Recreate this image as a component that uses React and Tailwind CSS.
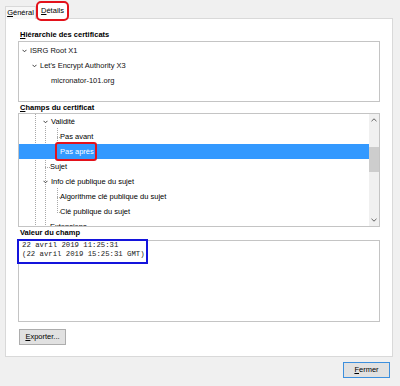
const Chevron = () => (
  <svg width="5" height="4" viewBox="0 0 5 4" className="shrink-0">
    <path d="M0.5 0.8 L2.5 2.8 L4.5 0.8" fill="none" stroke="#404040" strokeWidth="1" />
  </svg>
);

const U = ({ children }) => <span className="underline underline-offset-1">{children}</span>;

const fields = [
  { label: 'Validité', pl: 'pl-[24px]', chevron: true },
  { label: 'Pas avant', pl: 'pl-[41px]' },
  { label: 'Pas après', pl: 'pl-[41px]', selected: true },
  { label: 'Sujet', pl: 'pl-[31px]' },
  { label: 'Info clé publique du sujet', pl: 'pl-[24px]', chevron: true },
  { label: 'Algorithme clé publique du sujet', pl: 'pl-[41px]' },
  { label: 'Clé publique du sujet', pl: 'pl-[41px]' },
  { label: 'Extensions', pl: 'pl-[31px]' },
];

const TreeLines = () => (
  <svg className="absolute inset-0 pointer-events-none" width="350" height="112">
    <g stroke="#a8a8a8" strokeWidth="1" strokeDasharray="1 1" fill="none">
      <path d="M16.5 0 V112" />
      <path d="M26.5 12 V112" />
      <path d="M38.5 14 V38" />
      <path d="M38.5 74 V98" />
      <path d="M38 23.5 H41" />
      <path d="M26 53.5 H31" />
      <path d="M38 83.5 H41" />
      <path d="M38 98.5 H41" />
      <path d="M26 113.5 H31" />
    </g>
  </svg>
);

export default function App() {
  return (
    <div className="w-[400px] h-[386px] bg-[#f0f0f0] overflow-hidden text-[7.5px] text-black font-['Liberation_Sans',Arial,sans-serif]">
      {/* tabs */}
      <div className="flex items-end h-[19px] pl-[5px]">
        <div className="h-[13px] w-[31px] border border-b-0 border-[#d9d9d9] bg-[#f7f7f7] flex items-center justify-center leading-none">
          <span><U>G</U>énéral</span>
        </div>
        <div className="relative z-10 ml-[2px] h-[16px] w-[29px] bg-white flex items-center justify-center leading-none rounded-[3px] outline-2 outline-[#e3121b]">
          <span><U>D</U>étails</span>
        </div>
      </div>

      {/* panel */}
      <div className="-mt-px ml-[5px] w-[388px] h-[339px] border border-[#d9d9d9] bg-white pl-[12px] pt-[10px]">
        <div className="h-[12px] leading-[12px] font-bold pl-[2px]"><U>H</U>iérarchie des certificats</div>
        <div className="w-[362px] h-[61px] border border-[#c4c4c4] pt-[1px] text-[#111]">
          <div className="h-[15px] flex items-center gap-[3px] pl-[3px]">
            <Chevron />
            <span>ISRG Root X1</span>
          </div>
          <div className="h-[15px] flex items-center gap-[3px] pl-[13px]">
            <Chevron />
            <span>Let's Encrypt Authority X3</span>
          </div>
          <div className="h-[15px] flex items-center pl-[32px]">micronator-101.org</div>
        </div>

        <div className="h-[11px] leading-[11px] font-bold pl-[2px]"><U>C</U>hamps du certificat</div>
        <div className="w-[362px] h-[114px] border border-[#c4c4c4] flex overflow-hidden">
          <div className="relative flex-1">
            <TreeLines />
            {fields.map((f) => (
              <div
                key={f.label}
                className={`relative h-[15px] flex items-center gap-[3px] ${f.pl} ${f.selected ? 'bg-[#3399ff] text-white' : ''}`}
              >
                {f.chevron && <Chevron />}
                <span>{f.label}</span>
                {f.selected && (
                  <span className="absolute left-[36px] -top-[2px] w-[42px] h-[19px] border-2 border-[#e3121b] rounded-[3px]" />
                )}
              </div>
            ))}
          </div>
          <div className="w-[10px] bg-[#f0f0f0] flex flex-col items-center">
            <svg width="6" height="4" viewBox="0 0 6 4" className="mt-[4px]">
              <path d="M0.5 3.2 L3 0.8 L5.5 3.2" fill="none" stroke="#606060" strokeWidth="1" />
            </svg>
            <div className="mt-[25px] w-[10px] h-[25px] bg-[#cdcdcd]" />
            <div className="flex-1" />
            <svg width="6" height="4" viewBox="0 0 6 4" className="mb-[4px]">
              <path d="M0.5 0.8 L3 3.2 L5.5 0.8" fill="none" stroke="#606060" strokeWidth="1" />
            </svg>
          </div>
        </div>

        <div className="h-[13px] leading-[9px] font-bold pl-[2px] pt-[1px]">Valeur du champ</div>
        <div className="relative w-[362px] h-[82px] border border-[#c4c4c4] pl-[3px] font-['Liberation_Mono','Courier_New',monospace] text-[7.3px] leading-[9px] text-[#222]">
          <div>22 avril 2019 11:25:31</div>
          <div>(22 avril 2019 15:25:31 GMT)</div>
          <span className="absolute -left-[2px] -top-[2px] w-[131px] h-[25px] border-2 border-[#1414dc]" />
        </div>

        <button className="mt-[7px] ml-[1px] w-[47px] h-[16px] bg-[#e1e1e1] border border-[#adadad] flex items-center justify-center leading-none">
          <span><U>E</U>xporter...</span>
        </button>
      </div>

      <div className="flex justify-end pr-[10px] mt-[5px]">
        <button className="w-[47px] h-[16px] bg-[#e1e1e1] border border-[#3c8fdd] flex items-center justify-center leading-none">
          <span><U>F</U>ermer</span>
        </button>
      </div>
    </div>
  );
}
